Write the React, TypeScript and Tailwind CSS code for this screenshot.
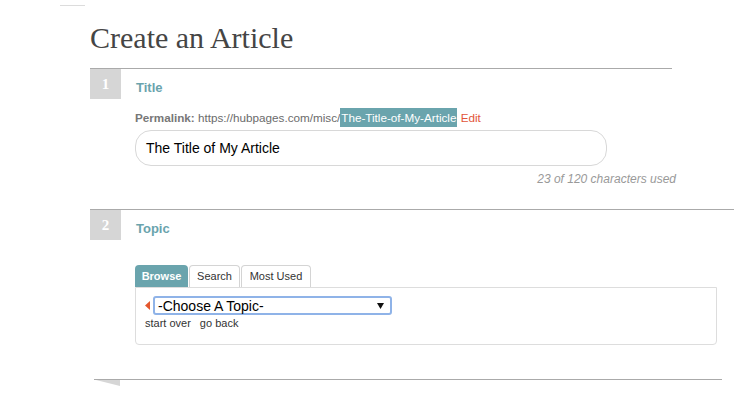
export default function App() {
  return (
    <div className="w-[742px] h-[407px] bg-white overflow-hidden font-['Liberation_Sans',Arial,sans-serif] text-[#333]">
      <div className="ml-[60px] pt-[5px]">
        <div className="w-[25px] h-px bg-[#dcdcdc]" />
      </div>
      <h1 className="ml-[90px] mt-[14px] text-[30px] leading-[36px] text-[#454545] font-['Liberation_Serif',Georgia,serif]">
        Create an Article
      </h1>

      {/* Step 1: title */}
      <section className="ml-[90px] mt-[12px] w-[582px] border-t border-[#aaa] flex">
        <StepNumber n={1} />
        <div className="pl-[14px] flex-1">
          <h2 className="pt-[11px] pl-px text-[13px] leading-[15px] font-bold text-[#6aa4ad]">Title</h2>
          <div className="mt-[13px] text-[11.7px] leading-[19px] h-[19px] text-[#6b6b6b] whitespace-nowrap">
            <span className="font-bold text-[#777]">Permalink:</span> https://hubpages.com/misc/
            <span className="inline-block px-[1px] bg-[#6aa4ad] text-white">The-Title-of-My-Article</span>{' '}
            <span className="text-[#e2553a]">Edit</span>
          </div>
          <div className="mt-[3px] w-[472px] h-[36px] rounded-[16px] border border-[#d8d8d8] pl-[10px] flex items-center text-[14px] text-black">
            The Title of My Article
          </div>
          <div className="mt-[5px] w-[541px] text-right italic text-[12px] leading-[16px] text-[#999]">
            23 of 120 characters used
          </div>
        </div>
      </section>

      {/* Step 2: topic */}
      <section className="ml-[90px] mt-[22px] w-[644px] border-t border-[#aaa] flex">
        <StepNumber n={2} />
        <div className="pl-[14px] flex-1">
          <h2 className="pt-[11px] pl-px text-[13px] leading-[15px] font-bold text-[#6aa4ad]">Topic</h2>
          <div className="mt-[29px] flex gap-px text-[11px]">
            <div className="w-[53px] h-[22px] rounded-t-[4px] bg-[#6aa4ad] text-white font-bold flex items-center justify-center">
              Browse
            </div>
            <div className="w-[51px] h-[22px] rounded-t-[4px] border border-b-0 border-[#d4d4d4] flex items-center justify-center">
              Search
            </div>
            <div className="w-[70px] h-[22px] rounded-t-[4px] border border-b-0 border-[#d4d4d4] flex items-center justify-center">
              Most Used
            </div>
          </div>
          <div className="w-[582px] h-[58px] border border-[#ddd] rounded-b-[4px] pl-[9px] pt-[8px]">
            <div className="flex items-center gap-[3px]">
              <svg width="5" height="9" viewBox="0 0 5 9">
                <polygon points="5,0 0,4.5 5,9" fill="#e4572e" />
              </svg>
              <div className="w-[239px] h-[19px] border-2 border-[#8fb3e8] rounded-[3px] flex items-center justify-between pl-[3px] pr-[6px] text-[14px] leading-none text-black">
                <span>-Choose A Topic-</span>
                <svg width="7" height="6" viewBox="0 0 7 6">
                  <polygon points="0,0 7,0 3.5,6" fill="#111" />
                </svg>
              </div>
            </div>
            <div className="mt-[2px] text-[11px] leading-[13px] flex gap-[9px]">
              <span>start over</span>
              <span>go back</span>
            </div>
          </div>
        </div>
      </section>

      {/* Step 3 (cut off) */}
      <div className="ml-[94px] mt-[34px] w-[628px] border-t border-[#aaa]">
        <svg width="24" height="6" viewBox="0 0 24 6" className="ml-[2px] block">
          <polygon points="0,0 24,0 24,6" fill="#d6d6d6" />
        </svg>
      </div>
    </div>
  );
}

function StepNumber({ n }: { n: number }) {
  return (
    <div className="w-[31px] h-[30px] shrink-0 bg-[#d6d6d6] flex items-center justify-center text-white font-bold text-[15px] font-['Liberation_Serif',Georgia,serif]">
      {n}
    </div>
  );
}
